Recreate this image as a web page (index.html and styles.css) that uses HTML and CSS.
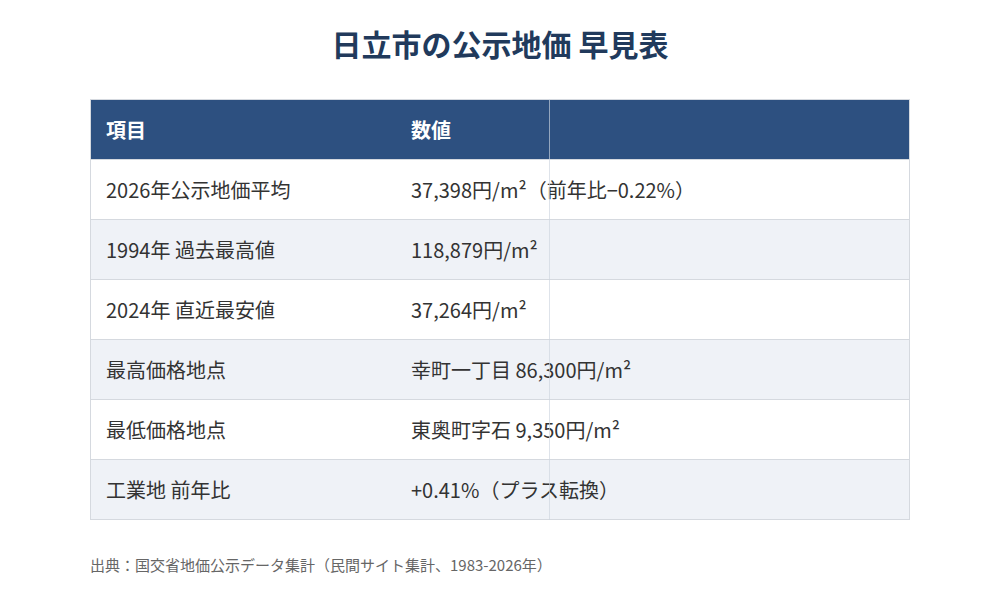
FILE: index.html
```html
<!DOCTYPE html>
<html lang="ja">
<head>
  <meta charset="UTF-8">
  <meta name="viewport" content="width=device-width, initial-scale=1.0">
  <title>日立市の公示地価 早見表</title>
  <link rel="stylesheet" href="styles.css">
</head>
<body>
  <div class="container">
    <h1>日立市の公示地価 早見表</h1>

    <div class="table-wrap">
      <table class="price-table">
        <thead>
          <tr>
            <th class="col-item">項目</th>
            <th>数値</th>
          </tr>
        </thead>
        <tbody>
          <tr>
            <td>2026年公示地価平均</td>
            <td>37,398円/m²（前年比−0.22%）</td>
          </tr>
          <tr>
            <td>1994年 過去最高値</td>
            <td>118,879円/m²</td>
          </tr>
          <tr>
            <td>2024年 直近最安値</td>
            <td>37,264円/m²</td>
          </tr>
          <tr>
            <td>最高価格地点</td>
            <td>幸町一丁目 86,300円/m²</td>
          </tr>
          <tr>
            <td>最低価格地点</td>
            <td>東奥町字石 9,350円/m²</td>
          </tr>
          <tr>
            <td>工業地 前年比</td>
            <td>+0.41%（プラス転換）</td>
          </tr>
        </tbody>
      </table>
      <div class="divider"></div>
    </div>

    <p class="source">出典：国交省地価公示データ集計（民間サイト集計、1983-2026年）</p>
  </div>
</body>
</html>
```

FILE: styles.css
```css
body {
  font-family: "Noto Sans CJK JP", "Noto Sans", sans-serif;
  margin: 0;
  background-color: #fff;
  color: #333;
}

.container {
  width: 820px;
  margin: 0 auto;
  padding-top: 21px;
}

h1 {
  text-align: center;
  color: #213a5c;
  font-size: 30px;
  font-weight: 700;
  line-height: 44px;
  margin: 0 0 34px;
}

.table-wrap {
  position: relative;
}

.price-table {
  width: 100%;
  border-collapse: collapse;
  table-layout: fixed;
  border: 1px solid #d5d9df;
  font-size: 20px;
}

.price-table th,
.price-table td {
  height: 59px;
  padding: 0 15px;
  text-align: left;
  white-space: nowrap;
  border-bottom: 1px solid #d5d9df;
}

.price-table .col-item {
  width: 275px;
}

.price-table th {
  background-color: #2d5080;
  color: #fff;
  font-weight: 700;
}

.price-table tbody tr:nth-child(even) {
  background-color: #eff2f7;
}

/* thin rule drawn over the table */
.divider {
  position: absolute;
  top: 0;
  bottom: 0;
  left: 459px;
  width: 1px;
  background-color: rgba(205, 212, 222, 0.65);
}

.source {
  font-size: 15px;
  color: #666;
  margin: 34px 0 0;
}
```
